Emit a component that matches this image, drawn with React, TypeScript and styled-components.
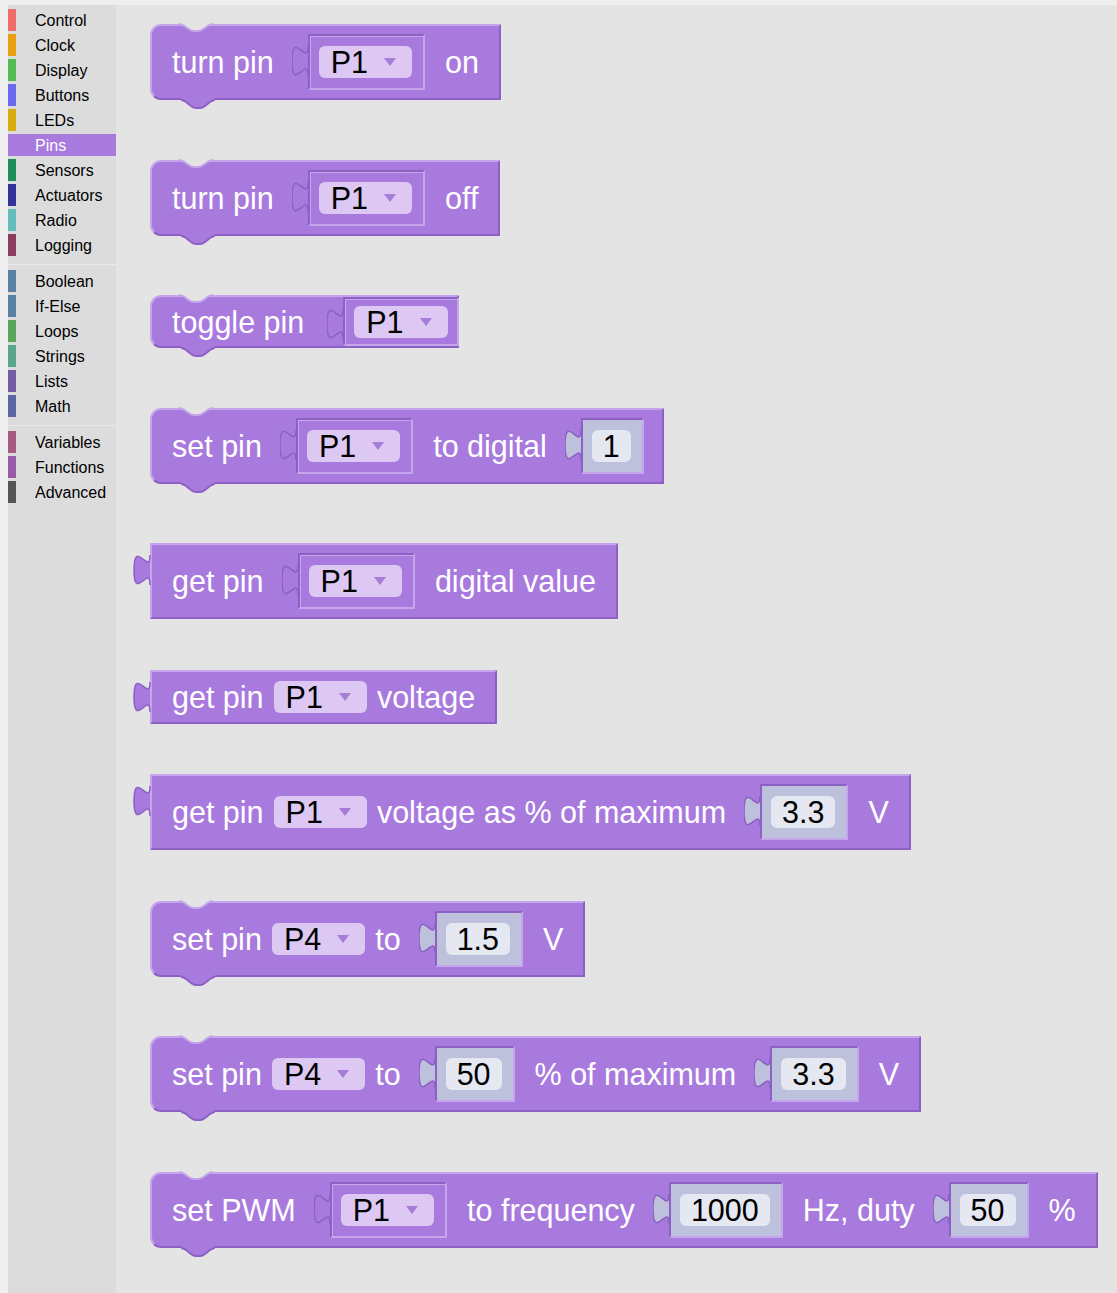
import React from "react";
import styled, { createGlobalStyle } from "styled-components";

const C = {
  block: "#a97ade",
  light: "#c5a5ec",
  dark: "#8c60c4",
  tabStroke: "#8a5fc0",
  fieldBg: "#dcc8f2",
  caret: "#a57cd6",
  numBox: "#bec1dc",
  numField: "#e5e7f1",
  ws: "#e4e4e4",
};

const Global = createGlobalStyle`
  html, body { margin: 0; padding: 0; background: #efefef; }
  body { font-family: "Liberation Sans", Arial, sans-serif; }
  #root { min-height: 100vh; }
`;

const Page = styled.div`
  display: flex;
  min-height: 100vh;
  box-sizing: border-box;
  padding: 5px 0 0 8px;
`;

const Sidebar = styled.nav`
  width: 108px;
  flex: none;
  background: #dcdcdc;
  border-right: 1px solid #e6e6e6;
  padding-top: 4px;
`;

const Item = styled.div<{ $active?: boolean }>`
  display: flex;
  align-items: center;
  height: 22px;
  margin-bottom: 3px;
  font-size: 16px;
  background: ${(p) => (p.$active ? C.block : "transparent")};
  color: ${(p) => (p.$active ? "#fff" : "#000")};
`;

const ItemText = styled.span`
  padding-top: 2px;
`;

const Swatch = styled.span<{ $c: string }>`
  width: 8px;
  align-self: stretch;
  margin-right: 19px;
  background: ${(p) => p.$c};
`;

const Sep = styled.div`
  height: 1px;
  background: #e8e8e8;
  margin: 8px 0 5px;
`;

const Workspace = styled.main`
  flex: 1;
  background: ${C.ws};
  padding: 19px 0 40px 33px;
  display: flex;
  flex-direction: column;
  align-items: flex-start;
`;

type Kind = "statement" | "reporter";

const BlockBody = styled.div<{ $kind: Kind; $flush?: boolean; $after: number }>`
  position: relative;
  display: flex;
  align-items: center;
  gap: 10px;
  box-sizing: border-box;
  min-height: ${(p) => (p.$flush ? 53 : 54)}px;
  padding: ${(p) => (p.$flush ? "0 0 0 20px" : "8px 20px")};
  background: ${C.block};
  border-top: 2px solid ${C.light};
  border-left: 2px solid ${C.light};
  border-bottom: 2px solid ${C.dark};
  border-right: 2px solid ${C.dark};
  border-radius: ${(p) => (p.$kind === "statement" ? "11px 0 0 11px" : "0")};
  margin-bottom: ${(p) => p.$after}px;
  font-size: 30.5px;
  color: #fff;
  white-space: nowrap;
`;

const Label = styled.span`
  line-height: 32px;
`;

const Notch = styled.svg`
  position: absolute;
  top: -2px;
  left: 27px;
  overflow: visible;
`;

const NextTab = styled.svg`
  position: absolute;
  bottom: -10px;
  left: 29px;
  overflow: visible;
`;

const OutTab = styled.svg`
  position: absolute;
  top: -2px;
  left: -18px;
  overflow: visible;
`;

const Slot = styled.div<{ $last?: boolean; $wide?: boolean }>`
  display: flex;
  align-items: stretch;
  margin-left: ${(p) => (p.$wide ? 13 : 8)}px;
  margin-right: ${(p) => (p.$last ? -2 : 10)}px;
`;

const SlotTab = styled.svg`
  display: block;
  flex: none;
`;

const Box = styled.div<{ $tone: "pin" | "num"; $flush?: boolean }>`
  display: flex;
  align-items: center;
  box-sizing: border-box;
  height: ${(p) => (p.$flush ? 49 : 56)}px;
  padding: ${(p) => (p.$flush ? "0 9px 0 9px" : "0 11px 0 9px")};
  background: ${(p) => (p.$tone === "num" ? C.numBox : C.block)};
  border-top: 2px solid ${C.dark};
  border-left: 2px solid ${C.dark};
  border-bottom: 2px solid ${C.light};
  border-right: 2px solid ${C.light};
  box-shadow: ${(p) => (p.$tone === "pin" ? `inset 1px 1px 0 ${C.light}` : "none")};
`;

const Dropdown = styled.span`
  display: inline-flex;
  align-items: center;
  height: 32px;
  line-height: 32px;
  padding: 0 16px 0 12px;
  border-radius: 6px;
  background: ${C.fieldBg};
  color: #000;
`;

const Caret = styled.span`
  width: 0;
  height: 0;
  margin-left: 16px;
  border-left: 6px solid transparent;
  border-right: 6px solid transparent;
  border-top: 8px solid ${C.caret};
`;

const NumField = styled.span`
  display: inline-flex;
  align-items: center;
  height: 32px;
  line-height: 32px;
  padding: 0 11px;
  border-radius: 6px;
  background: ${C.numField};
  color: #000;
`;

const TAB_PATH = "M16,12 C16,34 0,-6 0,27 C0,60 16,20 16,42";

type Part =
  | { t: "label"; v: string }
  | { t: "drop"; v: string }
  | { t: "pin"; v: string }
  | { t: "num"; v: string };

const Block: React.FC<{ kind: Kind; parts: Part[]; flush?: boolean; after: number }> = ({
  kind,
  parts,
  flush,
  after,
}) => (
  <BlockBody $kind={kind} $flush={flush} $after={after}>
    {kind === "statement" ? (
      <>
        <Notch width={34} height={8} viewBox="0 0 34 8">
          <path d="M0,0 C6,0 9,7 15,7 L19,7 C25,7 28,0 34,0 Z" fill={C.ws} />
          <path d="M0,0 C6,0 9,7 15,7 L19,7 C25,7 28,0 34,0" fill="none" stroke={C.light} strokeWidth={2} />
        </Notch>
        <NextTab width={34} height={10} viewBox="0 0 34 10">
          <path d="M0,0 L0,2 C6,2 9,10 15,10 L19,10 C25,10 28,2 34,2 L34,0 Z" fill={C.block} />
          <path d="M0,2 C6,2 9,10 15,10 L19,10 C25,10 28,2 34,2" fill="none" stroke={C.dark} strokeWidth={2} />
        </NextTab>
      </>
    ) : (
      <OutTab width={16} height={44} viewBox="0 0 16 44">
        <path d={TAB_PATH + " Z"} fill={C.block} />
        <path d={TAB_PATH} fill="none" stroke={C.dark} strokeWidth={1.5} />
      </OutTab>
    )}
    {parts.map((p, i) => {
      const last = i === parts.length - 1;
      if (p.t === "label") return <Label key={i}>{p.v}</Label>;
      if (p.t === "drop")
        return (
          <Dropdown key={i}>
            {p.v}
            <Caret />
          </Dropdown>
        );
      const h = flush ? 49 : 56;
      const tone = p.t === "pin" ? "pin" : "num";
      return (
        <Slot key={i} $last={last} $wide={flush}>
          <SlotTab width={16} height={h} viewBox={`0 0 16 ${h}`}>
            <path d={TAB_PATH + " Z"} fill={tone === "pin" ? C.block : C.numBox} />
            <path d={TAB_PATH} fill="none" stroke={C.tabStroke} strokeWidth={1.5} />
          </SlotTab>
          <Box $tone={tone} $flush={flush}>
            {p.t === "pin" ? (
              <Dropdown>
                {p.v}
                <Caret />
              </Dropdown>
            ) : (
              <NumField>{p.v}</NumField>
            )}
          </Box>
        </Slot>
      );
    })}
  </BlockBody>
);

const groups: { name: string; color: string; active?: boolean }[][] = [
  [
    { name: "Control", color: "#f06b6b" },
    { name: "Clock", color: "#e8a013" },
    { name: "Display", color: "#54bb54" },
    { name: "Buttons", color: "#6a6aee" },
    { name: "LEDs", color: "#d9ad10" },
    { name: "Pins", color: C.block, active: true },
    { name: "Sensors", color: "#1f8c5a" },
    { name: "Actuators", color: "#34339a" },
    { name: "Radio", color: "#63bdbd" },
    { name: "Logging", color: "#8c3c5c" },
  ],
  [
    { name: "Boolean", color: "#5b80a5" },
    { name: "If-Else", color: "#5b80a5" },
    { name: "Loops", color: "#5ba55b" },
    { name: "Strings", color: "#5ba58c" },
    { name: "Lists", color: "#745ba5" },
    { name: "Math", color: "#5b67a5" },
  ],
  [
    { name: "Variables", color: "#a55b80" },
    { name: "Functions", color: "#995ba5" },
    { name: "Advanced", color: "#555555" },
  ],
];

const L = (v: string): Part => ({ t: "label", v });
const D = (v: string): Part => ({ t: "drop", v });
const P = (v: string): Part => ({ t: "pin", v });
const N = (v: string): Part => ({ t: "num", v });

const S_GAP = 59.5;
const R_GAP = 50.5;

export default function App() {
  return (
    <>
      <Global />
      <Page>
        <Sidebar>
          {groups.map((g, gi) => (
            <React.Fragment key={gi}>
              {gi > 0 && <Sep />}
              {g.map((it) => (
                <Item key={it.name} $active={it.active}>
                  <Swatch $c={it.color} />
                  <ItemText>{it.name}</ItemText>
                </Item>
              ))}
            </React.Fragment>
          ))}
        </Sidebar>
        <Workspace>
          <Block kind="statement" after={S_GAP} parts={[L("turn pin"), P("P1"), L("on")]} />
          <Block kind="statement" after={S_GAP} parts={[L("turn pin"), P("P1"), L("off")]} />
          <Block kind="statement" flush after={S_GAP} parts={[L("toggle pin"), P("P1")]} />
          <Block kind="statement" after={S_GAP} parts={[L("set pin"), P("P1"), L("to digital"), N("1")]} />
          <Block kind="reporter" after={R_GAP} parts={[L("get pin"), P("P1"), L("digital value")]} />
          <Block kind="reporter" after={R_GAP} parts={[L("get pin"), D("P1"), L("voltage")]} />
          <Block
            kind="reporter"
            after={R_GAP}
            parts={[L("get pin"), D("P1"), L("voltage as % of maximum"), N("3.3"), L("V")]}
          />
          <Block kind="statement" after={S_GAP} parts={[L("set pin"), D("P4"), L("to"), N("1.5"), L("V")]} />
          <Block
            kind="statement"
            after={S_GAP}
            parts={[L("set pin"), D("P4"), L("to"), N("50"), L("% of maximum"), N("3.3"), L("V")]}
          />
          <Block
            kind="statement"
            after={20}
            parts={[L("set PWM"), P("P1"), L("to frequency"), N("1000"), L("Hz, duty"), N("50"), L("%")]}
          />
        </Workspace>
      </Page>
    </>
  );
}
